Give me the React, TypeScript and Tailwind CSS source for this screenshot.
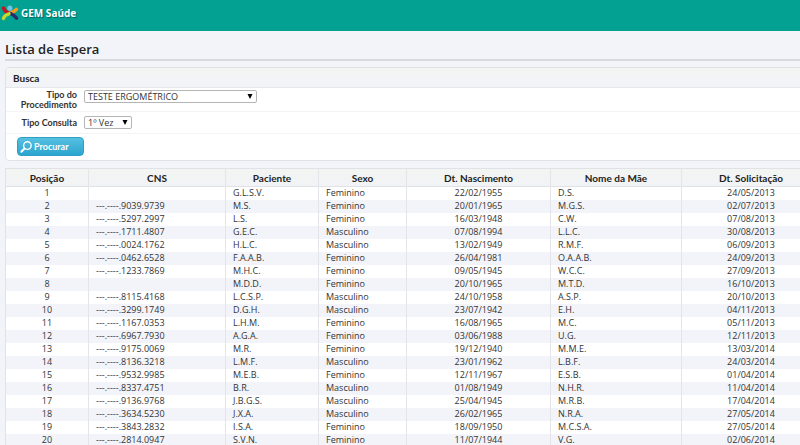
const columns = [
  { label: "Posição", width: "w-[83px]" },
  { label: "CNS", width: "w-[137px]" },
  { label: "Paciente", width: "w-[93px]" },
  { label: "Sexo", width: "w-[88px]" },
  { label: "Dt. Nascimento", width: "w-[144px]" },
  { label: "Nome da Mãe", width: "w-[131px]" },
  { label: "Dt. Solicitação", width: "w-[139px]" },
];

// cns, paciente, sexo, nascimento, mãe, solicitação
const rows = [
  ["", "G.L.S.V.", "Feminino", "22/02/1955", "D.S.", "24/05/2013"],
  ["---.----.9039.9739", "M.S.", "Feminino", "20/01/1965", "M.G.S.", "02/07/2013"],
  ["---.----.5297.2997", "L.S.", "Feminino", "16/03/1948", "C.W.", "07/08/2013"],
  ["---.----.1711.4807", "G.E.C.", "Masculino", "07/08/1994", "L.L.C.", "30/08/2013"],
  ["---.----.0024.1762", "H.L.C.", "Masculino", "13/02/1949", "R.M.F.", "06/09/2013"],
  ["---.----.0462.6528", "F.A.A.B.", "Feminino", "26/04/1981", "O.A.A.B.", "24/09/2013"],
  ["---.----.1233.7869", "M.H.C.", "Feminino", "09/05/1945", "W.C.C.", "27/09/2013"],
  ["", "M.D.D.", "Feminino", "20/10/1965", "M.T.D.", "16/10/2013"],
  ["---.----.8115.4168", "L.C.S.P.", "Masculino", "24/10/1958", "A.S.P.", "20/10/2013"],
  ["---.----.3299.1749", "D.G.H.", "Masculino", "23/07/1942", "E.H.", "04/11/2013"],
  ["---.----.1167.0353", "L.H.M.", "Feminino", "16/08/1965", "M.C.", "05/11/2013"],
  ["---.----.6967.7930", "A.G.A.", "Feminino", "03/06/1988", "U.G.", "12/11/2013"],
  ["---.----.9175.0069", "M.R.", "Feminino", "19/12/1940", "M.M.E.", "13/03/2014"],
  ["---.----.8136.3218", "L.M.F.", "Masculino", "23/01/1962", "L.B.F.", "24/03/2014"],
  ["---.----.9532.9985", "M.E.B.", "Feminino", "12/11/1967", "E.S.B.", "01/04/2014"],
  ["---.----.8337.4751", "B.R.", "Masculino", "01/08/1949", "N.H.R.", "11/04/2014"],
  ["---.----.9136.9768", "J.B.G.S.", "Masculino", "25/04/1945", "M.R.B.", "17/04/2014"],
  ["---.----.3634.5230", "J.X.A.", "Masculino", "26/02/1965", "N.R.A.", "27/05/2014"],
  ["---.----.3843.2832", "I.S.A.", "Feminino", "18/09/1950", "M.C.S.A.", "27/05/2014"],
  ["---.----.2814.0947", "S.V.N.", "Feminino", "11/07/1944", "V.G.", "02/06/2014"],
];

function Logo() {
  return (
    <svg viewBox="0 0 18 16" className="h-4 w-[18px]" fill="none" strokeLinecap="round" aria-hidden="true">
      <path d="M2.4 3.2C3.2 5.4 5 7 8 8.2" stroke="#c4161c" strokeWidth="3.6" />
      <path d="M15.4 4.4C14 6 12 7.2 9.5 8" stroke="#f39a1f" strokeWidth="3.6" />
      <path d="M9.6 8.6C12 9.4 14 11 15.6 13.2" stroke="#2b2a6c" strokeWidth="3.4" />
      <path d="M8 8.8C5 9.6 3 11.4 2.4 13.4" stroke="#c3d82e" strokeWidth="3.4" />
      <circle cx="8.8" cy="3.2" r="2.6" fill="#6cc5e8" />
    </svg>
  );
}

function SearchIcon() {
  return (
    <svg viewBox="0 0 12 12" className="size-3" fill="none" stroke="currentColor" strokeLinecap="round" aria-hidden="true">
      <circle cx="7.4" cy="4.6" r="3.8" strokeWidth="1.4" />
      <path d="M4.2 7.8L1.4 10.8" strokeWidth="2" />
    </svg>
  );
}

function Header() {
  return (
    <header className="flex h-[31px] items-start gap-0.5 bg-[#02a192] px-px pt-[5px]">
      <Logo />
      <span className="font-['Open_Sans',sans-serif] text-[10px] leading-4 font-bold text-white [text-shadow:1px_1px_1px_#00665c]">
        GEM Saúde
      </span>
    </header>
  );
}

function SelectField({ id, value, width }: { id: string; value: string; width: string }) {
  return (
    <div className={`relative ${width}`}>
      <select
        id={id}
        className="block h-[13px] w-full appearance-none rounded-xs border border-[#b5b5b5] bg-white pl-[3px] font-['Open_Sans',sans-serif] text-[9px] leading-[11px] text-[#333]"
      >
        <option>{value}</option>
      </select>
      <span className="pointer-events-none absolute inset-y-0 right-1 flex items-center text-black">
        <svg viewBox="0 0 6 5" className="h-[5px] w-1.5" aria-hidden="true">
          <path d="M0.5 0h5L3 5z" fill="currentColor" />
        </svg>
      </span>
    </div>
  );
}

function SearchPanel() {
  return (
    <form className="rounded-sm border border-[#dfe1e6] bg-white" onSubmit={(e) => e.preventDefault()}>
      <h2 className="h-5 rounded-t-sm border-b border-[#e4e6ea] bg-linear-to-b from-[#f3f5f2] to-[#f1f3f8] px-[7px] text-[10px] leading-5 font-bold text-[#222]">
        Busca
      </h2>
      <div className="flex h-6 items-start gap-[7px] border-b border-[#f3f4f7] pt-0.5">
        <label htmlFor="procedimento" className="w-[71px] text-right text-[9px] leading-[10px] font-bold text-[#333]">
          Tipo do
          <br />
          Procedimento
        </label>
        <SelectField id="procedimento" value="TESTE ERGOMÉTRICO" width="w-[173px]" />
      </div>
      <div className="flex h-[22px] items-center gap-[7px] border-b border-[#f3f4f7]">
        <label htmlFor="consulta" className="w-[71px] text-right text-[9px] leading-3 font-bold text-[#333]">
          Tipo Consulta
        </label>
        <SelectField id="consulta" value="1º Vez" width="w-12" />
      </div>
      <div className="px-[11px] pt-[3px] pb-1">
        <button
          type="submit"
          className="flex h-[19px] w-[67px] items-center gap-0.5 rounded-sm border border-[#2f9fc4] bg-linear-to-b from-[#56c0e0] to-[#2aa5cf] pl-0.5 text-[9px] font-bold text-white"
        >
          <SearchIcon />
          Procurar
        </button>
      </div>
    </form>
  );
}

function WaitingTable() {
  return (
    <table className="mt-[7px] w-full table-fixed border-collapse border border-[#e0e2e7] bg-white text-[9px] leading-3 text-[#333]">
      <thead>
        <tr className="h-[18px] border-b border-[#dfe1e6] bg-linear-to-b from-[#f3f5f2] to-[#f1f3f6] text-[10px] text-[#222]">
          {columns.map((col) => (
            <th key={col.label} scope="col" className={`border-r border-[#e3e5ea] p-0 font-bold ${col.width}`}>
              {col.label}
            </th>
          ))}
        </tr>
      </thead>
      <tbody className="font-['Open_Sans',sans-serif]">
        {rows.map(([cns, paciente, sexo, nascimento, mae, solicitacao], i) => (
          <tr key={i} className="h-[13px] even:bg-[#f2f4f9] *:border-r *:border-[#e3e5ea] *:px-[7px] *:py-0">
            <td className="text-center">{i + 1}</td>
            <td>{cns}</td>
            <td>{paciente}</td>
            <td>{sexo}</td>
            <td className="text-center">{nascimento}</td>
            <td>{mae}</td>
            <td className="text-center">{solicitacao}</td>
          </tr>
        ))}
      </tbody>
    </table>
  );
}

export default function App() {
  return (
    <div className="min-h-screen overflow-x-hidden bg-[#f3f4f9] font-[Lato,sans-serif]">
      <Header />
      <main className="-mr-5 ml-[5px]">
        <h1 className="mb-1.5 h-[30px] border-b-2 border-[#d8dae0] pt-2 font-['Open_Sans',sans-serif] text-[13px] leading-5 font-semibold text-[#222]">
          Lista de Espera
        </h1>
        <SearchPanel />
        <WaitingTable />
      </main>
    </div>
  );
}
